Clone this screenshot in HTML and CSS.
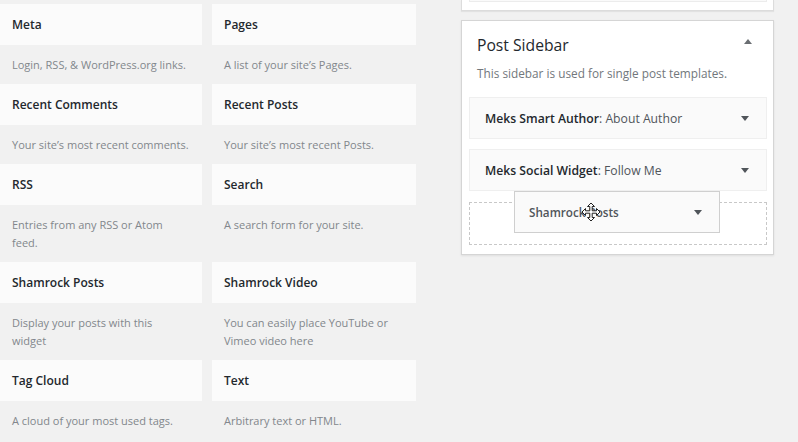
FILE: index.html
```html
<!DOCTYPE html>
<html>
<head>
<meta charset="utf-8">
<link rel="stylesheet" href="styles.css">
</head>
<body>
<div class="page">
  <div class="available">
    <div class="widget"><div class="w-title">Meta</div><div class="w-desc">Login, RSS, &amp; WordPress.org links.</div></div>
    <div class="widget"><div class="w-title">Pages</div><div class="w-desc">A list of your site’s Pages.</div></div>
    <div class="widget"><div class="w-title">Recent Comments</div><div class="w-desc">Your site’s most recent comments.</div></div>
    <div class="widget"><div class="w-title">Recent Posts</div><div class="w-desc">Your site’s most recent Posts.</div></div>
    <div class="widget"><div class="w-title">RSS</div><div class="w-desc">Entries from any RSS or Atom<br>feed.</div></div>
    <div class="widget"><div class="w-title">Search</div><div class="w-desc">A search form for your site.</div></div>
    <div class="widget"><div class="w-title">Shamrock Posts</div><div class="w-desc">Display your posts with this<br>widget</div></div>
    <div class="widget"><div class="w-title">Shamrock Video</div><div class="w-desc">You can easily place YouTube or<br>Vimeo video here</div></div>
    <div class="widget"><div class="w-title">Tag Cloud</div><div class="w-desc">A cloud of your most used tags.</div></div>
    <div class="widget"><div class="w-title">Text</div><div class="w-desc">Arbitrary text or HTML.</div></div>
  </div>
  <div class="sidebars">
    <div class="prev-box"><div class="prev-inner"></div></div>
    <div class="sidebar-box">
      <div class="sb-head">
        <h2 class="sb-title">Post Sidebar</h2>
        <span class="tri up"></span>
      </div>
      <p class="sb-desc">This sidebar is used for single post templates.</p>
      <div class="sb-list">
        <div class="sb-widget first"><span class="sbw-name"><b>Meks Smart Author</b>: About Author</span><span class="tri down"></span></div>
        <div class="sb-widget"><span class="sbw-name"><b>Meks Social Widget</b>: Follow Me</span><span class="tri down"></span></div>
        <div class="placeholder">
          <div class="dragging"><span class="drag-name">Shamrock Posts</span><span class="tri down"></span>
            <svg class="cursor" width="20" height="20" viewBox="0 0 20 20"><path d="M10 1 L13.5 4.5 L11.2 4.5 L11.2 8.8 L15.5 8.8 L15.5 6.5 L19 10 L15.5 13.5 L15.5 11.2 L11.2 11.2 L11.2 15.5 L13.5 15.5 L10 19 L6.5 15.5 L8.8 15.5 L8.8 11.2 L4.5 11.2 L4.5 13.5 L1 10 L4.5 6.5 L4.5 8.8 L8.8 8.8 L8.8 4.5 L6.5 4.5 Z" fill="#fff" stroke="#222" stroke-width="1"/></svg>
          </div>
        </div>
      </div>
    </div>
  </div>
</div>
</body>
</html>
```
FILE: styles.css
```css
* { box-sizing: border-box; }
html, body { margin: 0; padding: 0; }
body {
  background: #f1f1f1;
  font-family: "Open Sans", "Noto Sans", sans-serif;
  color: #23282d;
  width: 798px;
  height: 442px;
  overflow: hidden;
}
.page {
  display: flex;
  align-items: flex-start;
}
.available {
  display: grid;
  grid-template-columns: 202px 204px;
  column-gap: 10px;
  padding-top: 4px;
  width: 416px;
}
.w-title {
  background: #fbfbfb;
  height: 41px;
  line-height: 41px;
  padding: 0 12px;
  font-size: 12px;
  font-weight: 600;
  color: #23282d;
}
.w-desc {
  padding: 11px 12px 10px;
  font-size: 11px;
  line-height: 18px;
  color: #82878c;
  white-space: nowrap;
}
.sidebars {
  margin-left: 45px;
  width: 313px;
}
.prev-box {
  height: 11px;
  background: #fff;
  border: 1px solid #dcdcdc;
  border-top: none;
  box-shadow: 0 1px 1px rgba(0,0,0,0.06);
  padding: 0 6px 0 7px;
}
.prev-inner {
  height: 2px;
  background: #fafafa;
  border: 1px solid #ececec;
  border-top: none;
}
.sidebar-box {
  margin-top: 9px;
  background: #fff;
  border: 1px solid #d5d5d5;
  box-shadow: 0 1px 2px rgba(0,0,0,0.08);
  padding-bottom: 9px;
}
.sb-head {
  display: flex;
  justify-content: space-between;
  align-items: center;
  padding: 12px 21px 0 15px;
}
.sb-title {
  margin: 0;
  font-size: 15.7px;
  font-weight: 400;
  line-height: 24px;
  color: #23282d;
}
.tri {
  width: 0;
  height: 0;
  border-left: 4px solid transparent;
  border-right: 4px solid transparent;
}
.tri.up { border-bottom: 5px solid #6a6e72; margin-top: -8px; }
.tri.down { border-top: 5px solid #50555a; }
.sb-desc {
  margin: 7px 15px 0;
  font-size: 11.8px;
  line-height: 18px;
  color: #72777c;
  white-space: nowrap;
}
.sb-list {
  padding: 15px 6px 0 7px;
  display: flex;
  flex-direction: column;
  gap: 10px;
}
.sb-widget {
  height: 42px;
  background: #fafafa;
  border: 1px solid #efefef;
  display: flex;
  align-items: center;
  justify-content: space-between;
  padding: 0 17px 0 15px;
  font-size: 12.2px;
  color: #50555a;
}
.sbw-name b { font-weight: 600; color: #23282d; }
.placeholder {
  position: relative;
  height: 43px;
  border: 1px dashed #c8c8c8;
  margin-top: 1px;
}
.dragging {
  position: absolute;
  left: 44px;
  top: -12px;
  width: 206px;
  height: 42px;
  background: #fafafa;
  border: 1px solid #cfcfcf;
  display: flex;
  align-items: center;
  justify-content: space-between;
  padding: 0 17px 0 14px;
  font-size: 11.7px;
  font-weight: 600;
  color: #50555a;
}
.cursor {
  position: absolute;
  left: 66px;
  top: 10px;
}
```
